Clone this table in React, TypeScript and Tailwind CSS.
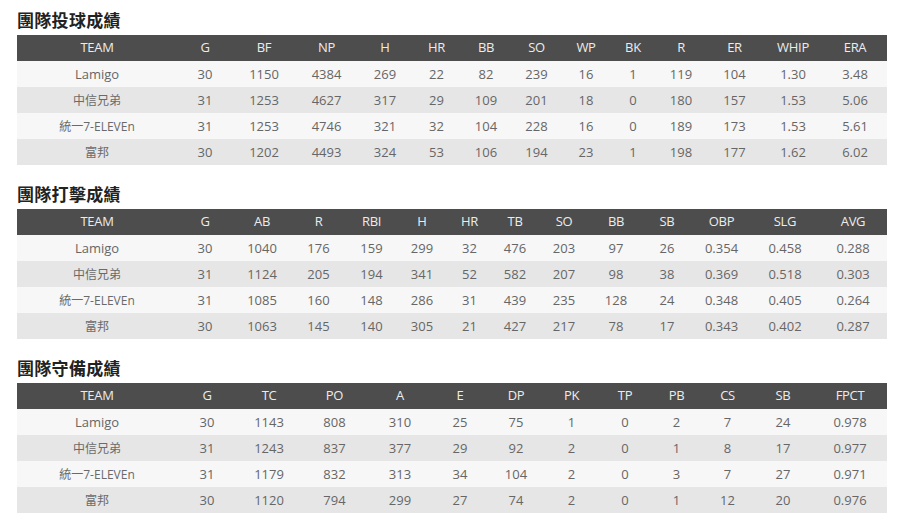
const teams = ['Lamigo', '中信兄弟', '統一7-ELEVEn', '富邦'];

const tables = [
  {
    title: '團隊投球成績',
    cols: 'grid-cols-[160px_56px_62px_63px_54px_49px_50px_51px_48px_46px_50px_57px_60px_64px]',
    head: ['TEAM', 'G', 'BF', 'NP', 'H', 'HR', 'BB', 'SO', 'WP', 'BK', 'R', 'ER', 'WHIP', 'ERA'],
    rows: [
      ['30', '1150', '4384', '269', '22', '82', '239', '16', '1', '119', '104', '1.30', '3.48'],
      ['31', '1253', '4627', '317', '29', '109', '201', '18', '0', '180', '157', '1.53', '5.06'],
      ['31', '1253', '4746', '321', '32', '104', '228', '16', '0', '189', '173', '1.53', '5.61'],
      ['30', '1202', '4493', '324', '53', '106', '194', '23', '1', '198', '177', '1.62', '6.02'],
    ],
  },
  {
    title: '團隊打擊成績',
    cols: 'grid-cols-[160px_56px_58px_55px_51px_50px_45px_46px_52px_52px_50px_59px_68px_68px]',
    head: ['TEAM', 'G', 'AB', 'R', 'RBI', 'H', 'HR', 'TB', 'SO', 'BB', 'SB', 'OBP', 'SLG', 'AVG'],
    rows: [
      ['30', '1040', '176', '159', '299', '32', '476', '203', '97', '26', '0.354', '0.458', '0.288'],
      ['31', '1124', '205', '194', '341', '52', '582', '207', '98', '38', '0.369', '0.518', '0.303'],
      ['31', '1085', '160', '148', '286', '31', '439', '235', '128', '24', '0.348', '0.405', '0.264'],
      ['30', '1063', '145', '140', '305', '21', '427', '217', '78', '17', '0.343', '0.402', '0.287'],
    ],
  },
  {
    title: '團隊守備成績',
    cols: 'grid-cols-[160px_60px_64px_67px_64px_56px_56px_55px_52px_51px_51px_60px_74px]',
    head: ['TEAM', 'G', 'TC', 'PO', 'A', 'E', 'DP', 'PK', 'TP', 'PB', 'CS', 'SB', 'FPCT'],
    rows: [
      ['30', '1143', '808', '310', '25', '75', '1', '0', '2', '7', '24', '0.978'],
      ['31', '1243', '837', '377', '29', '92', '2', '0', '1', '8', '17', '0.977'],
      ['31', '1179', '832', '313', '34', '104', '2', '0', '3', '7', '27', '0.971'],
      ['30', '1120', '794', '299', '27', '74', '2', '0', '1', '12', '20', '0.976'],
    ],
  },
];

export default function App() {
  return (
    <div className="w-[900px] h-[523px] bg-white pl-[17px] pt-[9px] font-['Open_Sans','Noto_Sans_CJK_TC',sans-serif] overflow-hidden">
      {tables.map((t, ti) => (
        <div key={t.title} className={ti > 0 ? 'mt-[18px]' : ''}>
          {/* section title */}
          <h2 className="h-[26px] leading-[24px] text-[17px] font-bold text-[#222] tracking-[0.3px]">{t.title}</h2>
          <div className="w-[870px]">
            <div className={`grid ${t.cols} h-[26px] bg-[#4d4d4d] text-[#ececec] text-[13px] items-center text-center`}>
              {t.head.map((h, i) => (
                <div key={i} className="tracking-[-0.3px]">{h}</div>
              ))}
            </div>
            {t.rows.map((r, ri) => (
              <div
                key={ri}
                className={`grid ${t.cols} h-[26px] items-center text-center text-[13px] text-[#666] pt-px ${ri % 2 === 0 ? 'bg-[#f7f7f7]' : 'bg-[#e6e6e6]'}`}
              >
                <div className={ri === 0 ? '' : 'text-[12px] text-[#6a6a6a]'}>{teams[ri]}</div>
                {r.map((v, i) => (
                  <div key={i}>{v}</div>
                ))}
              </div>
            ))}
          </div>
        </div>
      ))}
    </div>
  );
}
